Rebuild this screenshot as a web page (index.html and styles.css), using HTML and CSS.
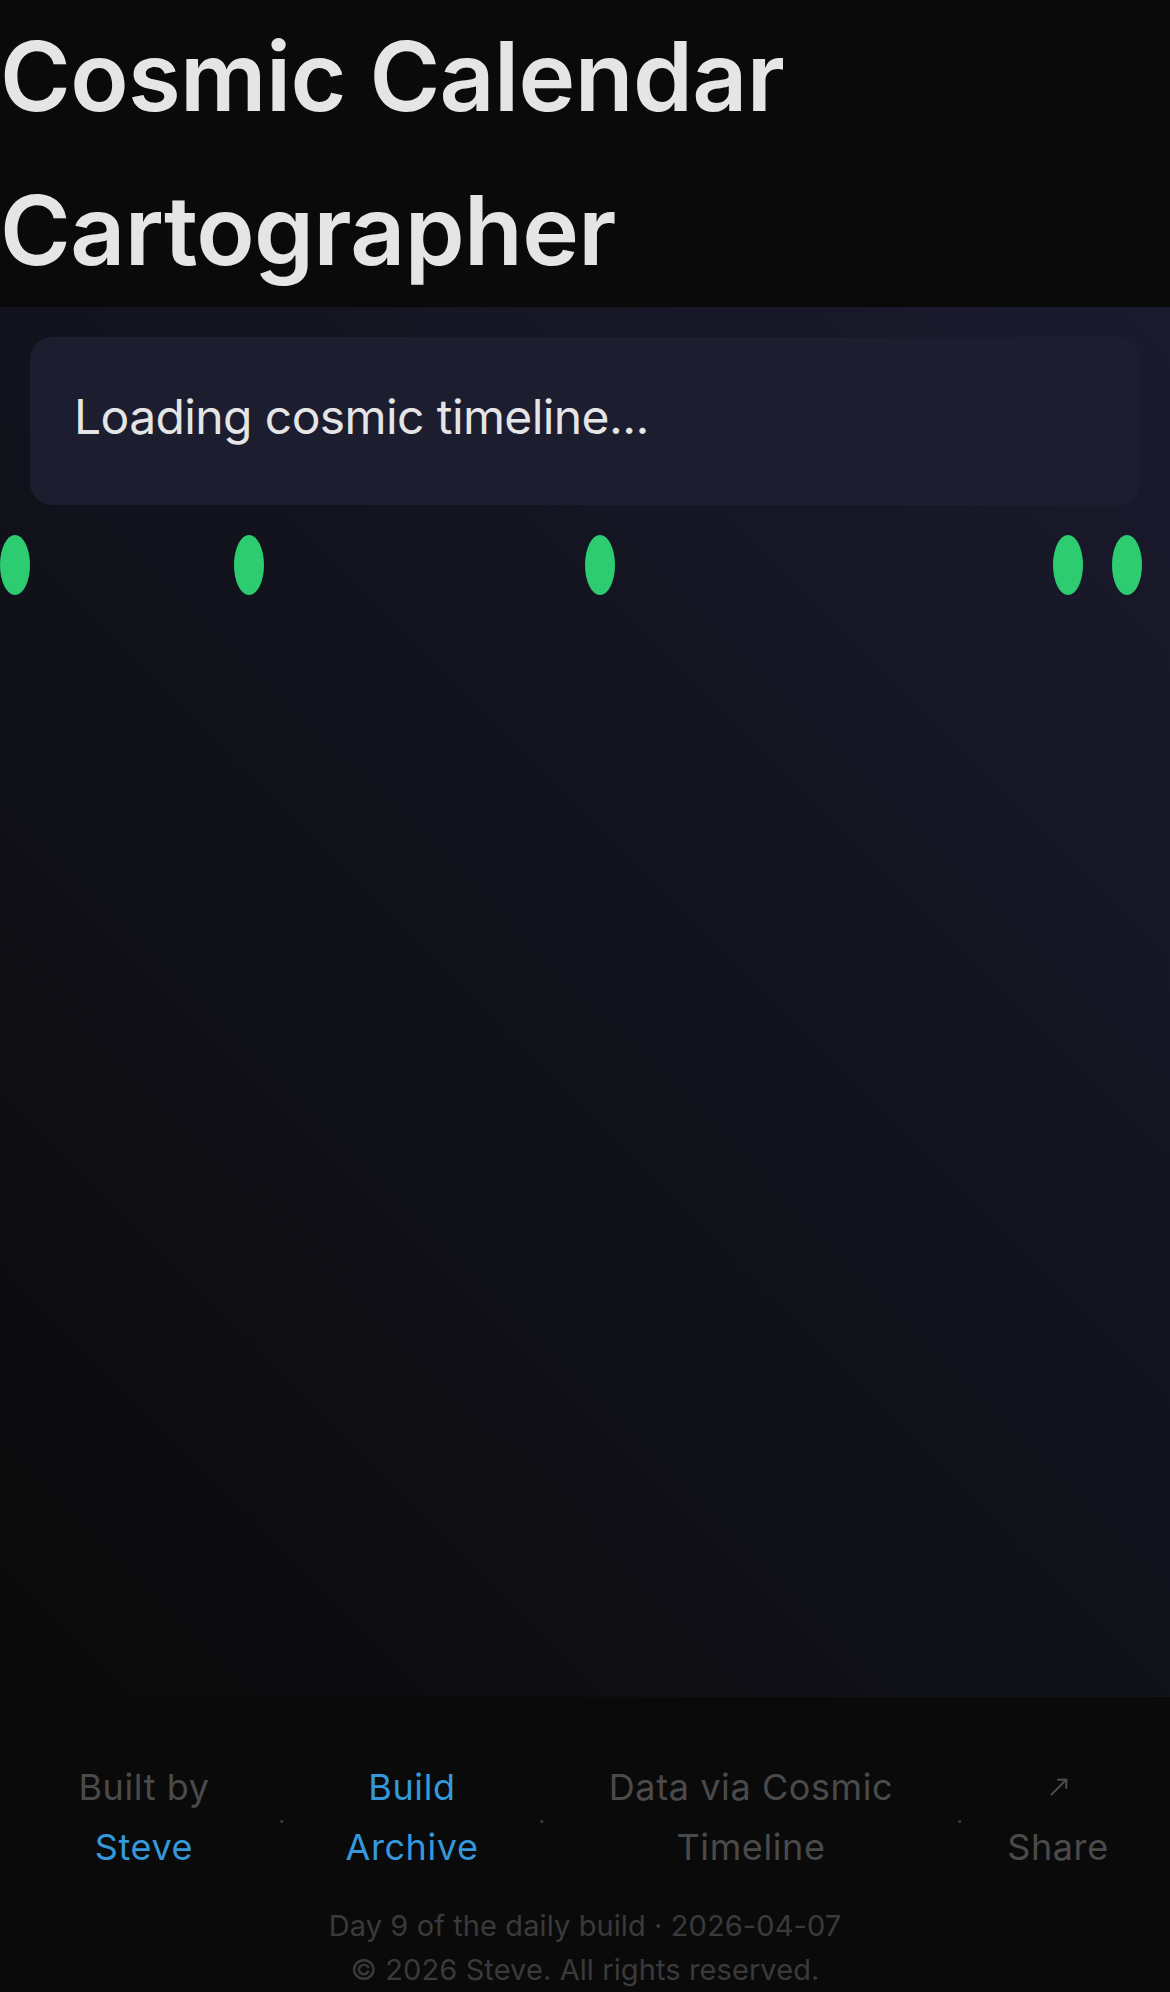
FILE: index.html
```html
<!DOCTYPE html>
<html lang="en">
<head>
<meta charset="utf-8">
<title>Cosmic Calendar Cartographer</title>
<link rel="stylesheet" href="styles.css">
</head>
<body>
<header class="site-header">
  <h1 class="title">Cosmic Calendar Cartographer</h1>
</header>
<main class="main">
  <section class="status-card">
    <p class="status-text">Loading cosmic timeline...</p>
  </section>
  <div class="timeline">
    <span class="event-dot" style="left:0%"></span>
    <span class="event-dot" style="left:20%"></span>
    <span class="event-dot" style="left:50%"></span>
    <span class="event-dot" style="left:90%"></span>
    <span class="event-dot" style="left:95%"></span>
  </div>
</main>
<footer class="site-footer">
  <nav class="footer-nav">
    <span class="footer-item item-built">Built by <a class="footer-link" href="#">Steve</a></span>
    <span class="footer-sep">·</span>
    <span class="footer-item item-archive"><a class="footer-link" href="#">Build Archive</a></span>
    <span class="footer-sep">·</span>
    <span class="footer-item item-data">Data via Cosmic Timeline</span>
    <span class="footer-sep">·</span>
    <span class="footer-item item-share">
      <span class="share-icon"><svg width="18" height="18" viewBox="0 0 18 18" fill="none" stroke="currentColor" stroke-width="2" stroke-linecap="round" stroke-linejoin="round" aria-hidden="true"><path d="M1.5 16.5 L16.5 1.5 M8 1.8 L16.5 1.5 L16.2 10"/></svg></span>Share
    </span>
  </nav>
  <div class="footer-meta">
    <p class="meta-line">Day 9 of the daily build · 2026-04-07</p>
    <p class="meta-line">© 2026 Steve. All rights reserved.</p>
  </div>
</footer>
</body>
</html>
```
FILE: styles.css
```css
html, body {
  margin: 0;
  padding: 0;
}

body {
  font-family: Inter, "Noto Sans", "Liberation Sans", sans-serif;
  background: #0a0a0a;
  color: #e5e5e5;
  min-height: 100vh;
  display: flex;
  flex-direction: column;
}

.site-header {
  background: #0a0a0a;
}

.title {
  margin: 0;
  font-size: 96px;
  font-weight: 600;
  line-height: 1.6;
  letter-spacing: -0.6px;
  color: #e5e5e5;
}

.main {
  flex: 1;
  padding: 30px;
  background: linear-gradient(45deg, #0a0a0a 0%, #1a1a2e 100%);
}

.status-card {
  background: #1d1d30;
  border-radius: 22px;
  padding: 44px 44px 52px;
}

.status-text {
  margin: 0;
  font-size: 48px;
  line-height: 1.5;
  letter-spacing: -0.6px;
  color: #e5e5e5;
}

.timeline {
  position: relative;
  height: 60px;
  margin: 30px -30px 0;
}

.event-dot {
  position: absolute;
  top: 0;
  width: 30px;
  height: 60px;
  border-radius: 50%;
  background: #2ecc71;
}

.site-footer {
  background: #0a0a0a;
  padding: 60px 0 0;
}

.footer-nav {
  display: flex;
  justify-content: center;
  align-items: center;
  gap: 24px;
  padding-right: 8px;
  font-size: 36px;
  line-height: 60px;
  color: #4a4a4a;
  letter-spacing: 0.6px;
}

.footer-item {
  text-align: center;
}

.item-built { width: 218px; }
.item-archive { width: 202px; }
.item-data { width: 360px; }
.item-share { width: 138px; }

.footer-link {
  color: #3498db;
  text-decoration: none;
}

.share-icon {
  display: flex;
  height: 60px;
  align-items: center;
  justify-content: center;
  padding-left: 2px;
  color: #4a4a4a;
}

.footer-sep {
  width: 10px;
  margin-top: 10px;
  text-align: center;
  font-size: 24px;
  color: #3a3a3a;
}

.footer-meta {
  margin-top: 27px;
  text-align: center;
}

.meta-line {
  margin: 0;
  font-size: 29px;
  line-height: 44px;
  color: #3a3a3a;
  letter-spacing: 0.1px;
}
```
